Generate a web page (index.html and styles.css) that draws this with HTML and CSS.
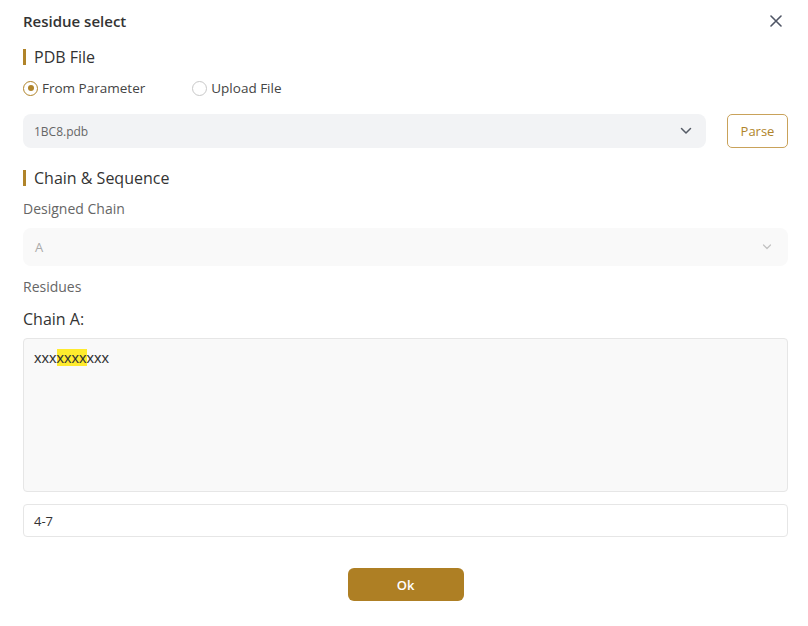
FILE: index.html
```html
<!DOCTYPE html>
<html>
<head>
<meta charset="utf-8">
<link rel="stylesheet" href="styles.css">
</head>
<body>
<div class="dialog">
  <div class="header">
    <div class="title">Residue select</div>
    <button class="close" aria-label="close">
      <svg width="12" height="12" viewBox="0 0 12 12"><path d="M1 1L11 11M11 1L1 11" stroke="#4f5565" stroke-width="1.6" stroke-linecap="round"/></svg>
    </button>
  </div>

  <div class="section-title sec1"><span class="bar"></span>PDB File</div>

  <div class="radios">
    <label class="radio checked"><span class="dot"></span>From Parameter</label>
    <label class="radio"><span class="dot"></span>Upload File</label>
  </div>

  <div class="file-row">
    <div class="select grey">
      <span class="val">1BC8.pdb</span>
      <svg width="12" height="8" viewBox="0 0 12 8"><path d="M1.5 1.5L6 6L10.5 1.5" fill="none" stroke="#555b66" stroke-width="1.5" stroke-linecap="round" stroke-linejoin="round"/></svg>
    </div>
    <button class="parse">Parse</button>
  </div>

  <div class="section-title sec2"><span class="bar"></span>Chain &amp; Sequence</div>

  <div class="label lbl1">Designed Chain</div>
  <div class="select light">
    <span class="val">A</span>
    <svg width="10" height="6" viewBox="0 0 10 6"><path d="M1.5 1L5 4.5L8.5 1" fill="none" stroke="#c2c2c2" stroke-width="1.2" stroke-linecap="round" stroke-linejoin="round"/></svg>
  </div>

  <div class="label lbl2">Residues</div>
  <div class="chain">Chain A:</div>
  <div class="seq">xxx<mark>xxxx</mark>xxx</div>
  <div class="range">4-7</div>

  <div class="footer">
    <button class="ok">Ok</button>
  </div>
</div>
</body>
</html>
```

FILE: styles.css
```css
* { box-sizing: border-box; }
html, body { margin: 0; padding: 0; background: #fff; }
body { font-family: "Open Sans", "Noto Sans", sans-serif; color: #333; }

.dialog {
  width: 808px;
  padding: 10px 20px 0 23px;
  display: flex;
  flex-direction: column;
}

.header {
  display: flex;
  justify-content: space-between;
  align-items: center;
  height: 22px;
}
.title { font-size: 15px; font-weight: 600; color: #333; line-height: 22px; }
.close {
  width: 24px; height: 22px; padding: 0; border: 0; background: none;
  display: flex; align-items: center; justify-content: center;
}

.section-title {
  display: flex;
  align-items: center;
  height: 22px;
  font-size: 16px;
  color: #333;
}
.section-title .bar {
  width: 3px; height: 16px; background: #b0842a; margin-right: 8px;
}
.sec1 { margin-top: 14px; }
.sec2 { margin-top: 19px; }

.radios {
  margin-top: 10px;
  display: flex;
  height: 20px;
  align-items: center;
  font-size: 13.5px;
  color: #444;
}
.radio { display: flex; align-items: center; margin-right: 47px; }
.radio .dot {
  width: 15px; height: 15px; border-radius: 50%;
  border: 1px solid #c8c8c8; margin-right: 4px; position: relative;
}
.radio.checked .dot { border: 1.5px solid #b0842a; }
.radio.checked .dot::after {
  content: ""; position: absolute; left: 50%; top: 50%;
  width: 6px; height: 6px; margin: -3px 0 0 -3px;
  border-radius: 50%; background: #b0842a;
}

.file-row {
  margin-top: 16px;
  display: flex;
  gap: 21px;
  height: 34px;
}
.select {
  display: flex;
  align-items: center;
  justify-content: space-between;
  border-radius: 8px;
}
.select.grey { flex: 1; background: #f2f3f5; padding: 0 14px 0 11px; height: 34px; }
.select.grey .val { font-size: 12px; color: #666; }
.select.light { flex: none; background: #f9f9f9; padding: 0 16px 0 12px; height: 38px; margin-top: 9px; }
.select.light .val { font-size: 13px; color: #aaa; }

.parse {
  width: 61px; height: 34px; padding: 0;
  border: 1px solid #c9a25a; border-radius: 5px; background: #fff;
  color: #b0842a; font-family: "Open Sans", sans-serif; font-size: 13px;
}

.label { font-size: 14px; color: #666; line-height: 20px; }
.lbl1 { margin-top: 10px; }
.lbl2 { margin-top: 11px; }

.chain { margin-top: 11px; font-size: 16px; line-height: 22px; color: #333; }

.seq {
  margin-top: 8px;
  height: 154px;
  background: #f9f9f9;
  border: 1px solid #e6e6e6;
  border-radius: 4px;
  padding: 9px 10px;
  font-family: "Liberation Sans", Arial, sans-serif;
  font-size: 15px;
  line-height: 20px;
  color: #333;
}
.seq mark { background: #ffeb2e; color: #333; }

.range {
  margin-top: 12px;
  height: 33px;
  border: 1px solid #e6e6e6;
  border-radius: 4px;
  padding: 0 10px;
  display: flex;
  align-items: center;
  font-size: 13px;
  color: #333;
}

.footer { margin-top: 31px; display: flex; justify-content: center; }
.ok {
  width: 116px; height: 33px; border: 0; border-radius: 6px;
  background: #ae7f24; color: #fff;
  font-family: "Open Sans", sans-serif; font-size: 13px; font-weight: 600;
}
```
